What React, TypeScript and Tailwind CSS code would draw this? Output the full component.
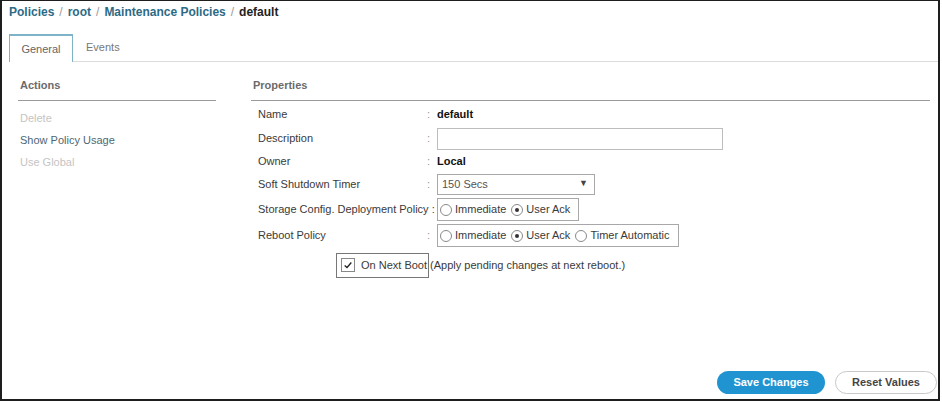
import { useState } from "react";

type RadioOption = { label: string; checked: boolean };

function Radio({ label, checked }: RadioOption) {
  return (
    <label className="flex items-center gap-[3px]">
      <span className="flex h-[12px] w-[12px] items-center justify-center rounded-full border border-[#8a8a8a] bg-white">
        {checked && <span className="h-[4px] w-[4px] rounded-full bg-[#333]" />}
      </span>
      <span>{label}</span>
    </label>
  );
}

function RadioGroup({ options, width }: { options: RadioOption[]; width: string }) {
  return (
    <div className={`flex h-[23px] items-center gap-[5px] border border-[#a8a8a8] pl-[2px] ${width}`}>
      {options.map((o) => (
        <Radio key={o.label} {...o} />
      ))}
    </div>
  );
}

function Row({
  label,
  height,
  colon = true,
  children,
}: {
  label: string;
  height: string;
  colon?: boolean;
  children: React.ReactNode;
}) {
  return (
    <div className={`flex items-center ${height}`}>
      {colon ? (
        <>
          <div className="w-[169px] shrink-0 whitespace-nowrap">{label}</div>
          <div className="w-[10px] shrink-0 text-[#999]">:</div>
        </>
      ) : (
        <div className="w-[179px] shrink-0 whitespace-nowrap">{label}</div>
      )}
      {children}
    </div>
  );
}

export default function App() {
  const [description, setDescription] = useState("");

  return (
    <div
      className="h-[402px] w-[942px] bg-white pr-[2px]"
      style={{ fontFamily: '"Liberation Sans", Arial, sans-serif' }}
    >
      <div className="flex h-[401px] flex-col border-t border-r-2 border-b-2 border-l-2 border-[#1e1e1e] text-[11px] text-[#3a3a3a]">
        {/* breadcrumb */}
        <div className="flex h-[20px] items-center gap-[5px] pl-[7px] pt-[2px] text-[12px] font-bold text-[#2d6a86]">
          <span>Policies</span>
          <span className="font-normal text-[#999]">/</span>
          <span>root</span>
          <span className="font-normal text-[#999]">/</span>
          <span>Maintenance Policies</span>
          <span className="font-normal text-[#999]">/</span>
          <span className="text-[#222]">default</span>
        </div>

        {/* tabs */}
        <div className="mt-[13px] flex h-[28px] items-end pl-[7px]">
          <div className="flex h-[28px] w-[64px] items-center justify-center border-t-2 border-r border-l border-[#7fb4c8] bg-white text-[#666]">
            General
          </div>
          <div className="flex h-[28px] flex-1 items-center border-b border-[#dcdcdc] pl-[13px] text-[#777]">
            Events
          </div>
        </div>

        {/* body */}
        <div className="flex flex-1 pt-[15px]">
          {/* actions */}
          <div className="ml-[16px] w-[198px]">
            <div className="border-b border-[#9a9a9a] pb-[6px] pl-[2px] font-bold text-[#6b6b6b]">
              Actions
            </div>
            <div className="flex flex-col pl-[2px] pt-[7px]">
              <div className="flex h-[22px] items-center text-[#c4c4c4]">Delete</div>
              <div className="flex h-[22px] items-center text-[#4d6773]">Show Policy Usage</div>
              <div className="flex h-[22px] items-center text-[#c4c4c4]">Use Global</div>
            </div>
          </div>

          {/* properties */}
          <div className="ml-[35px] flex flex-1 flex-col">
            <div className="mr-[8px] border-b border-[#9a9a9a] pb-[6px] pl-[2px] font-bold text-[#6b6b6b]">
              Properties
            </div>
            <div className="flex flex-col pl-[7px] pt-[3px]">
              <Row label="Name" height="h-[22px]">
                <span className="font-bold text-[#111]">default</span>
              </Row>
              <Row label="Description" height="h-[26px]">
                <input
                  value={description}
                  onChange={(e) => setDescription(e.target.value)}
                  className="h-[22px] w-[286px] border border-[#bdbdbd] px-[4px] outline-none"
                />
              </Row>
              <Row label="Owner" height="h-[20px]">
                <span className="font-bold text-[#111]">Local</span>
              </Row>
              <Row label="Soft Shutdown Timer" height="h-[25px]">
                <div className="flex h-[21px] w-[158px] items-center justify-between border border-[#a8a8a8] pl-[4px] pr-[6px] text-[#555]">
                  <span>150 Secs</span>
                  <span className="text-[9px] text-[#444]">▼</span>
                </div>
              </Row>
              <Row label="Storage Config. Deployment Policy :" height="h-[26px]" colon={false}>
                <RadioGroup
                  width="w-[142px]"
                  options={[
                    { label: "Immediate", checked: false },
                    { label: "User Ack", checked: true },
                  ]}
                />
              </Row>
              <Row label="Reboot Policy" height="h-[26px]">
                <RadioGroup
                  width="w-[242px]"
                  options={[
                    { label: "Immediate", checked: false },
                    { label: "User Ack", checked: true },
                    { label: "Timer Automatic", checked: false },
                  ]}
                />
              </Row>
              <div className="mt-[4px] flex h-[25px] items-center pl-[78px]">
                <div className="flex h-[25px] items-center gap-[6px] border border-[#777] pl-[4px] pr-[1px]">
                  <span className="flex h-[14px] w-[14px] items-center justify-center border border-[#888]">
                    <svg viewBox="0 0 12 12" className="h-[10px] w-[10px]">
                      <path d="M2 6.5 L4.8 9 L10 3" fill="none" stroke="#222" strokeWidth="1.6" />
                    </svg>
                  </span>
                  <span className="whitespace-nowrap">On Next Boot</span>
                </div>
                <span className="pl-[1px]">(Apply pending changes at next reboot.)</span>
              </div>
            </div>
          </div>
        </div>

        {/* footer */}
        <div className="flex justify-end gap-[10px] pb-[5px] pr-[1px]">
          <button className="h-[23px] w-[108px] rounded-full bg-[#1f94d0] text-[11px] font-bold text-white">
            Save Changes
          </button>
          <button className="h-[23px] w-[102px] rounded-full border border-[#c8c8c8] bg-white text-[11px] font-bold text-[#444]">
            Reset Values
          </button>
        </div>
      </div>
    </div>
  );
}
